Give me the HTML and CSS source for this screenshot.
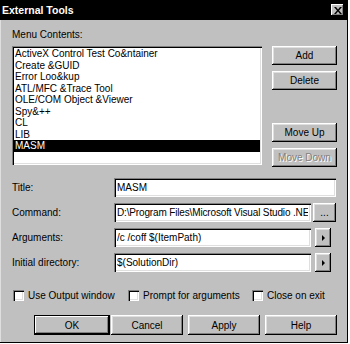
FILE: index.html
```html
<!DOCTYPE html>
<html lang="en">
<head>
  <meta charset="UTF-8" />
  <title>External Tools</title>
  <link rel="stylesheet" href="styles.css">
</head>
<body>
  <!-- Hộp thoại External Tools -->
  <div class="dialog">
    <div class="titlebar">
      <span class="title">External Tools</span>
      <span class="close">
        <svg width="8" height="7" viewBox="0 0 8 7"><path d="M0 0h2l2 2.5L6 0h2L5 3.5 8 7H6L4 4.5 2 7H0l3-3.5z" fill="#000"/></svg>
      </span>
    </div>

    <div class="content">
      <div class="top-label">Menu Contents:</div>

      <!-- Danh sách công cụ và các nút bên cạnh -->
      <div class="menu-row">
        <ul class="listbox">
          <li>ActiveX Control Test Co&amp;ntainer</li>
          <li>Create &amp;GUID</li>
          <li>Error Loo&amp;kup</li>
          <li>ATL/MFC &amp;Trace Tool</li>
          <li>OLE/COM Object &amp;Viewer</li>
          <li>Spy&amp;++</li>
          <li>CL</li>
          <li>LIB</li>
          <li class="selected">MASM</li>
        </ul>
        <div class="side-buttons">
          <button class="btn">Add</button>
          <button class="btn">Delete</button>
          <button class="btn push-down">Move Up</button>
          <button class="btn" disabled>Move Down</button>
        </div>
      </div>

      <!-- Các trường thông tin -->
      <div class="form">
        <div class="field-row">
          <label>Title:</label>
          <input class="field field-wide" type="text" value="MASM">
        </div>
        <div class="field-row">
          <label>Command:</label>
          <input class="field field-tight" type="text" value="D:\Program Files\Microsoft Visual Studio .NET 2003\Vc7\bin\ml.exe">
          <button class="btn btn-browse">...</button>
        </div>
        <div class="field-row">
          <label>Arguments:</label>
          <input class="field" type="text" value="/c /coff $(ItemPath)">
          <button class="btn btn-arrow"><span class="arrow"></span></button>
        </div>
        <div class="field-row">
          <label>Initial directory:</label>
          <input class="field" type="text" value="$(SolutionDir)">
          <button class="btn btn-arrow"><span class="arrow"></span></button>
        </div>
      </div>

      <!-- Các checkbox -->
      <div class="checks">
        <label class="check check-1"><span class="box"></span>Use Output window</label>
        <label class="check check-2"><span class="box"></span>Prompt for arguments</label>
        <label class="check"><span class="box"></span>Close on exit</label>
      </div>

      <!-- Nút cuối hộp thoại -->
      <div class="actions">
        <button class="btn btn-action btn-default">OK</button>
        <button class="btn btn-action">Cancel</button>
        <button class="btn btn-action">Apply</button>
        <button class="btn btn-action">Help</button>
      </div>
    </div>
  </div>
</body>
</html>
```

FILE: styles.css
```css
/* Giao diện tổng thể */
body {
  margin: 0;
  background: #fff;
  font-family: 'Liberation Sans', Arial, sans-serif;
  font-size: 10px;
  color: #000;
}

.dialog {
  width: 348px;
  height: 343px;
  background: #c0c0c0;
  box-shadow: inset -1px -1px #000, inset 1px 1px #dfdfdf;
  box-sizing: border-box;
  display: flex;
  flex-direction: column;
}

/* Thanh tiêu đề */
.titlebar {
  height: 20px;
  background: #000;
  display: flex;
  align-items: center;
  justify-content: space-between;
  padding: 0 4px 0 2px;
}

.title {
  color: #fff;
  font-weight: bold;
  font-size: 10.5px;
}

.close {
  width: 13px;
  height: 12px;
  background: #c0c0c0;
  box-shadow: inset -1px -1px #000, inset 1px 1px #fff, inset -2px -2px #808080;
  display: flex;
  align-items: center;
  justify-content: center;
}

.content {
  padding: 9px 11px 0 12px;
}

.top-label {
  line-height: 12px;
  margin-bottom: 5px;
}

/* Danh sách */
.menu-row {
  display: flex;
  gap: 10px;
  align-items: flex-start;
}

.listbox {
  list-style: none;
  margin: 0;
  padding: 2px;
  width: 250px;
  height: 119px;
  box-sizing: border-box;
  background: #fff;
  box-shadow: inset 1px 1px #808080, inset 2px 2px #000, inset -1px -1px #fff, inset -2px -2px #dfdfdf;
}

.listbox li {
  height: 11.5px;
  line-height: 11.5px;
  padding-left: 1px;
  white-space: nowrap;
}

.listbox li.selected {
  background: #000;
  color: #fff;
}

.side-buttons {
  width: 65px;
  height: 121px;
  display: flex;
  flex-direction: column;
  gap: 6px;
}

.push-down {
  margin-top: auto;
}

/* Nút kiểu Windows cổ điển */
.btn {
  font-family: inherit;
  font-size: 10px;
  color: #000;
  background: #c0c0c0;
  border: none;
  padding: 0;
  height: 19px;
  box-shadow: inset -1px -1px #000, inset 1px 1px #fff, inset -2px -2px #808080, inset 2px 2px #dfdfdf;
}

.btn:disabled {
  color: #808080;
  text-shadow: 1px 1px #fff;
}

/* Các trường nhập */
.form {
  margin-top: 11px;
  display: flex;
  flex-direction: column;
  gap: 6px;
}

.field-row {
  display: flex;
  align-items: center;
  height: 19px;
}

.field-row label {
  width: 102px;
}

.field {
  width: 197px;
  height: 19px;
  box-sizing: border-box;
  border: none;
  padding: 0 3px;
  font-family: inherit;
  font-size: 10px;
  background: #fff;
  box-shadow: inset 1px 1px #808080, inset 2px 2px #000, inset -1px -1px #fff, inset -2px -2px #dfdfdf;
}

.field-wide {
  width: 222px;
}

.field-tight {
  letter-spacing: -0.15px;
}

.btn-browse {
  width: 23px;
  margin-left: 2px;
}

.btn-arrow {
  width: 16px;
  margin-left: 4px;
  display: flex;
  align-items: center;
  justify-content: center;
}

.arrow {
  width: 0;
  height: 0;
  border-top: 3px solid transparent;
  border-bottom: 3px solid transparent;
  border-left: 3px solid #000;
}

/* Checkbox */
.checks {
  display: flex;
  margin-top: 17px;
  padding-left: 1px;
  height: 12px;
  align-items: center;
}

.check {
  display: flex;
  align-items: center;
  gap: 4px;
}

.check-1 { width: 115px; }
.check-2 { width: 124px; }

.box {
  width: 11px;
  height: 11px;
  background: #fff;
  box-shadow: inset 1px 1px #808080, inset 2px 2px #000, inset -1px -1px #fff, inset -2px -2px #dfdfdf;
}

/* Hàng nút cuối */
.actions {
  display: flex;
  margin-top: 14px;
  padding-left: 22px;
  gap: 5px;
}

.btn-action {
  width: 72px;
  height: 20px;
}

.btn-default {
  width: 76px;
  margin-right: -4px;
  box-shadow: inset 0 0 0 1px #000, inset -2px -2px #000, inset 2px 2px #fff, inset -3px -3px #808080;
}
```
